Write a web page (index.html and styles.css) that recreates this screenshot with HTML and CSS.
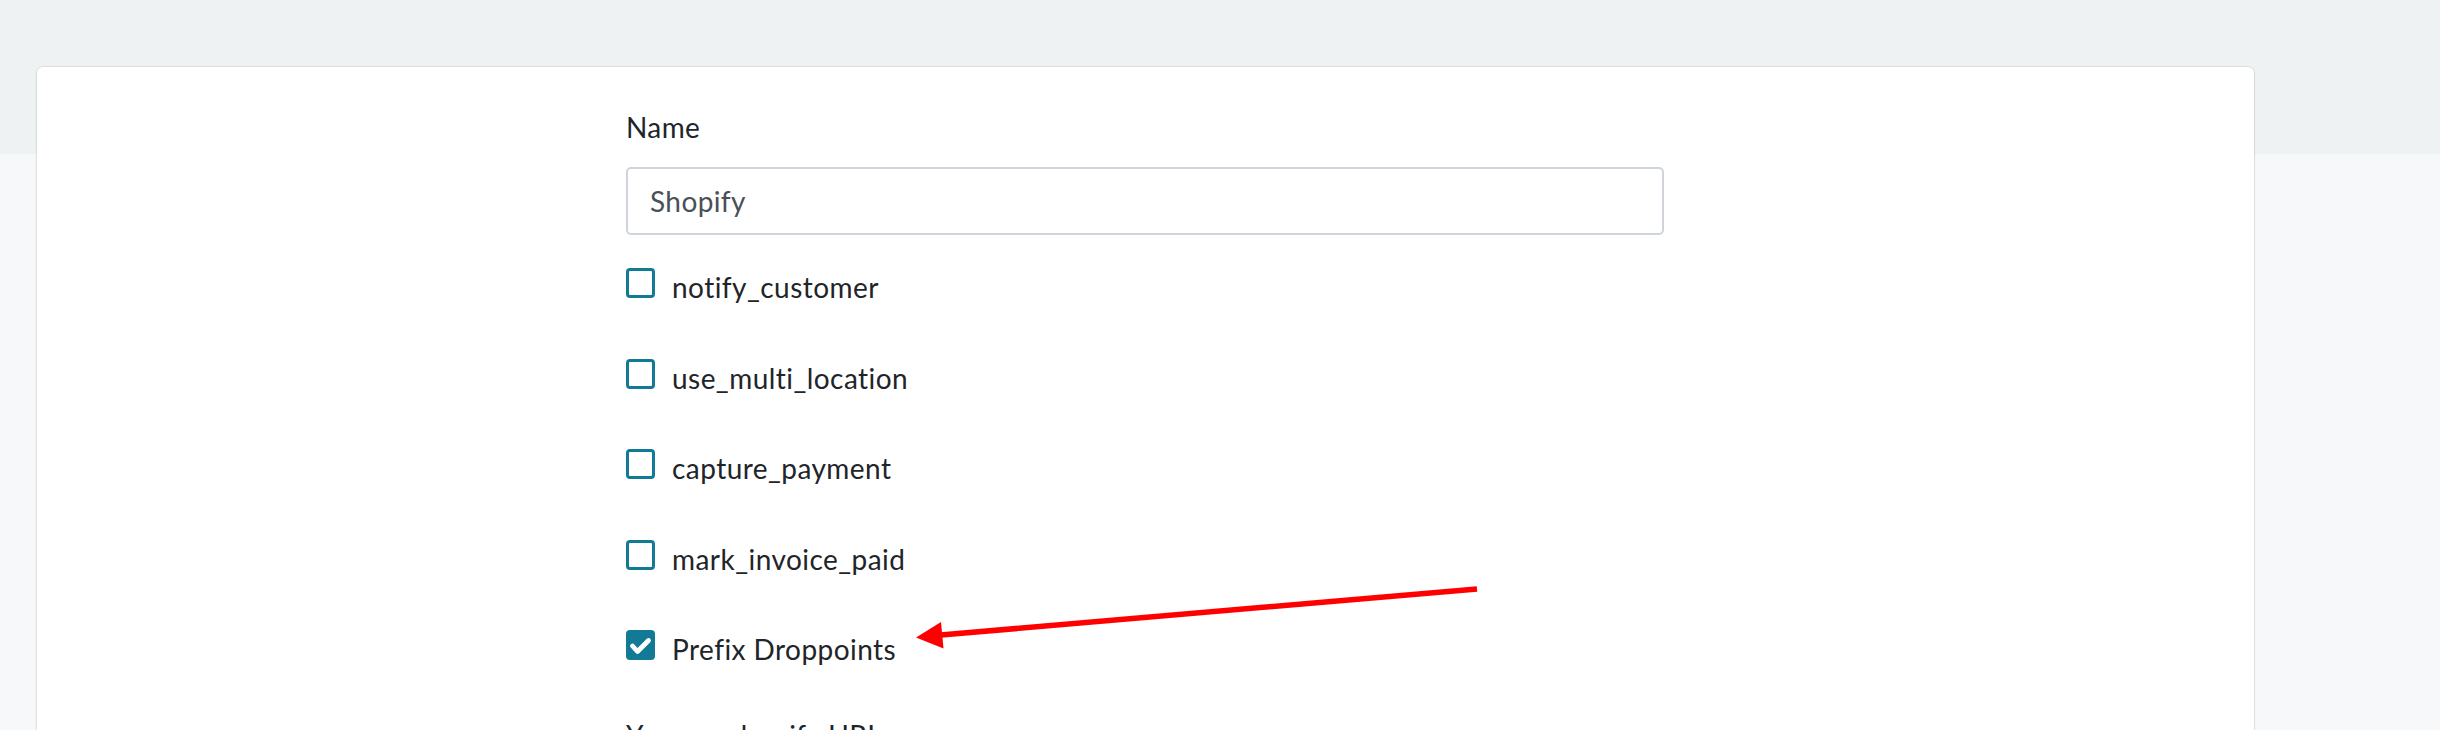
FILE: index.html
```html
<!DOCTYPE html>
<html lang="en">
<head>
<meta charset="utf-8">
<title>Shopify settings</title>
<link rel="stylesheet" href="styles.css">
</head>
<body>
<div class="card">
  <form class="form">
    <label class="field-label" for="name">Name</label>
    <input class="text-input" id="name" type="text" value="Shopify">
    <div class="checks">
      <div class="check-row">
        <span class="box"></span>
        <span class="check-label">notify_customer</span>
      </div>
      <div class="check-row">
        <span class="box"></span>
        <span class="check-label">use_multi_location</span>
      </div>
      <div class="check-row">
        <span class="box"></span>
        <span class="check-label">capture_payment</span>
      </div>
      <div class="check-row">
        <span class="box"></span>
        <span class="check-label">mark_invoice_paid</span>
      </div>
      <div class="check-row">
        <span class="box checked">
          <svg viewBox="0 0 29 30" width="29" height="30"><polyline points="6.5,16 11.5,21.5 22.5,10.5" fill="none" stroke="#fff" stroke-width="4.8" stroke-linecap="round" stroke-linejoin="round"/></svg>
        </span>
        <span class="check-label">Prefix Droppoints</span>
      </div>
    </div>
    <label class="field-label next">Your myshopify URL</label>
  </form>
</div>
<svg class="arrow" width="2440" height="730" viewBox="0 0 2440 730">
  <line x1="1477" y1="589" x2="935" y2="635.5" stroke="#ff0000" stroke-width="5.5"/>
  <polygon points="916,637.5 941,622 943.5,648.5" fill="#ff0000"/>
</svg>
</body>
</html>
```
FILE: styles.css
```css
html, body {
  margin: 0;
  padding: 0;
}
body {
  width: 2440px;
  height: 730px;
  overflow: hidden;
  background: linear-gradient(#eef2f3 0, #eef2f3 154px, #f7f8fa 154px, #f7f8fa 100%);
  font-family: Lato, "Open Sans", sans-serif;
  color: #212529;
  position: relative;
}
.card {
  margin: 67px 186px 0 37px;
  height: 700px;
  background: #ffffff;
  border-radius: 6px;
  box-shadow: 0 0 0 1px rgba(0, 0, 0, 0.06), 0 1px 3px rgba(0, 0, 0, 0.1);
  padding-top: 39px;
  box-sizing: border-box;
}
.form {
  width: 1038px;
  margin-left: 589px;
  display: flex;
  flex-direction: column;
}
.field-label {
  font-size: 28px;
  line-height: 42px;
  letter-spacing: 0.4px;
  color: #212529;
}
.text-input {
  margin-top: 19px;
  height: 68px;
  box-sizing: border-box;
  border: 2px solid #ced4da;
  border-radius: 5px;
  padding: 0 22px;
  font-family: Lato, "Open Sans", sans-serif;
  font-size: 28px;
  letter-spacing: 0.4px;
  color: #495057;
  background: #fff;
  outline: none;
}
.checks {
  margin-top: 31px;
  display: flex;
  flex-direction: column;
  gap: 48.5px;
}
.check-row {
  display: flex;
  align-items: flex-start;
  height: 42px;
}
.box {
  width: 29px;
  height: 30px;
  margin-top: 2px;
  box-sizing: border-box;
  border: 3px solid #137a96;
  border-radius: 4px;
  flex: none;
  display: flex;
}
.box.checked {
  background: #137a96;
  border: none;
}
.box svg {
  display: block;
}
.check-label {
  margin-left: 17px;
  font-size: 28px;
  line-height: 42px;
  letter-spacing: 0.45px;
}
.next {
  margin-top: 44px;
}
.arrow {
  position: absolute;
  left: 0;
  top: 0;
  pointer-events: none;
}
```
